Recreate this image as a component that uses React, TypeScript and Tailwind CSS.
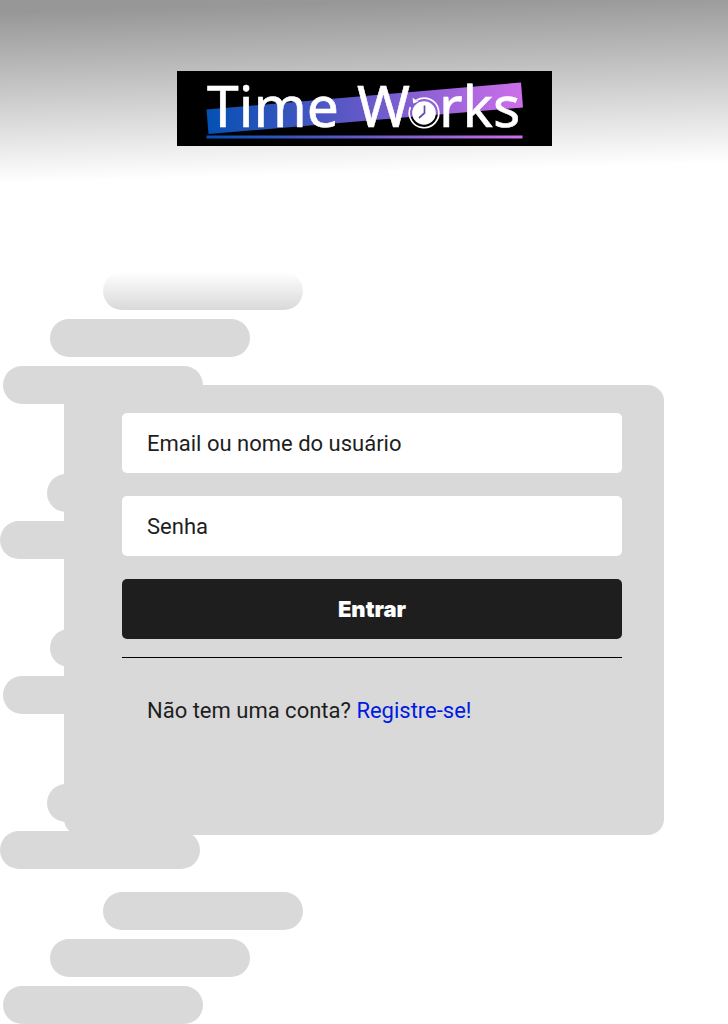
const stripes = [
  'ml-[103px] bg-linear-to-b from-white to-[#d9d9d9]',
  'ml-[50px] bg-[#d9d9d9]',
  'ml-[3px] bg-[#d9d9d9]',
  'mt-[14px] ml-[100px] bg-[#d9d9d9]',
  'ml-[47px] bg-[#d9d9d9]',
  'ml-0 bg-[#d9d9d9]',
  'mt-[14px] ml-[103px] bg-[#d9d9d9]',
  'ml-[50px] bg-[#d9d9d9]',
  'ml-[3px] bg-[#d9d9d9]',
  'mt-[14px] ml-[100px] bg-[#d9d9d9]',
  'ml-[47px] bg-[#d9d9d9]',
  'ml-0 bg-[#d9d9d9]',
  'mt-[14px] ml-[103px] bg-[#d9d9d9]',
  'ml-[50px] bg-[#d9d9d9]',
  'ml-[3px] bg-[#d9d9d9]',
];

function Logo() {
  return (
    <svg viewBox="0 0 375 75" className="h-[75px] w-[375px] overflow-visible bg-black" role="img" aria-label="Time Works">
      <defs>
        <linearGradient id="band" x1="0" y1="0" x2="1" y2="0">
          <stop offset="0" stopColor="#0450b4" />
          <stop offset="0.5" stopColor="#6659c8" />
          <stop offset="1" stopColor="#ce6fea" />
        </linearGradient>
      </defs>
      <path d="M29.5 38.5 L344 11.5 L346 36.5 L31.5 63 Z" fill="url(#band)" />
      <rect x="29.5" y="64.5" width="316" height="3" fill="url(#band)" />
      <g fill="#fff" stroke="#fff" strokeWidth="0.6" fontFamily="'Noto Sans', sans-serif" fontSize="57">
        <text x="30" y="56">Time</text>
        <text x="180" y="56">W</text>
        <text x="262" y="56">rks</text>
      </g>
      <circle cx="247" cy="42" r="11.8" fill="#fff" />
      <path d="M239.5 29.2 A14.8 14.8 0 1 1 233.4 36.2" fill="none" stroke="#fff" strokeWidth="1.7" />
      <path d="M235.6 26.8 L236.2 32.6 L241.4 30.6 Z" fill="#fff" />
      <path d="M247.5 34.5 V42 L242 47" fill="none" stroke="#5b4fae" strokeWidth="1.7" />
    </svg>
  );
}

const field =
  'h-[60px] w-full rounded-[5px] bg-white px-[25px] text-[22px] text-[#1e1e1e] placeholder:text-[#1e1e1e] placeholder:opacity-100';

export default function App() {
  return (
    <div className="min-h-screen bg-white font-['Roboto',sans-serif]">
      <header className="flex h-[272px] justify-center bg-[linear-gradient(178.4deg,#979797_12px,#fff_183px)] pt-[71px]">
        <Logo />
      </header>
      <main className="grid">
        <div aria-hidden="true" className="col-start-1 row-start-1 flex flex-col gap-[9px]">
          {stripes.map((s, i) => (
            <div key={i} className={`h-[38px] w-[200px] rounded-full ${s}`} />
          ))}
        </div>
        <form
          onSubmit={(e) => e.preventDefault()}
          className="col-start-1 row-start-1 mt-[113px] flex h-[450px] w-full max-w-[600px] flex-col self-start justify-self-center rounded-2xl bg-[#d9d9d9] pt-7 pr-[42px] pl-[58px]"
        >
          <div className="flex flex-col gap-[23px]">
            <input className={field} type="text" aria-label="Email ou nome do usuário" placeholder="Email ou nome do usuário" />
            <input className={field} type="password" aria-label="Senha" placeholder="Senha" />
            <button
              type="submit"
              className="h-[60px] rounded-[5px] bg-[#1e1e1e] font-['Inter',sans-serif] text-[22px] font-black text-white"
            >
              Entrar
            </button>
          </div>
          <hr className="mt-[18px] border-black" />
          <p className="mt-[35px] px-[25px] text-[22px] leading-9 text-[#1e1e1e]">
            Não tem uma conta?{' '}
            <a href="#registro" className="text-[#001ae0]">
              Registre-se!
            </a>
          </p>
        </form>
      </main>
    </div>
  );
}
